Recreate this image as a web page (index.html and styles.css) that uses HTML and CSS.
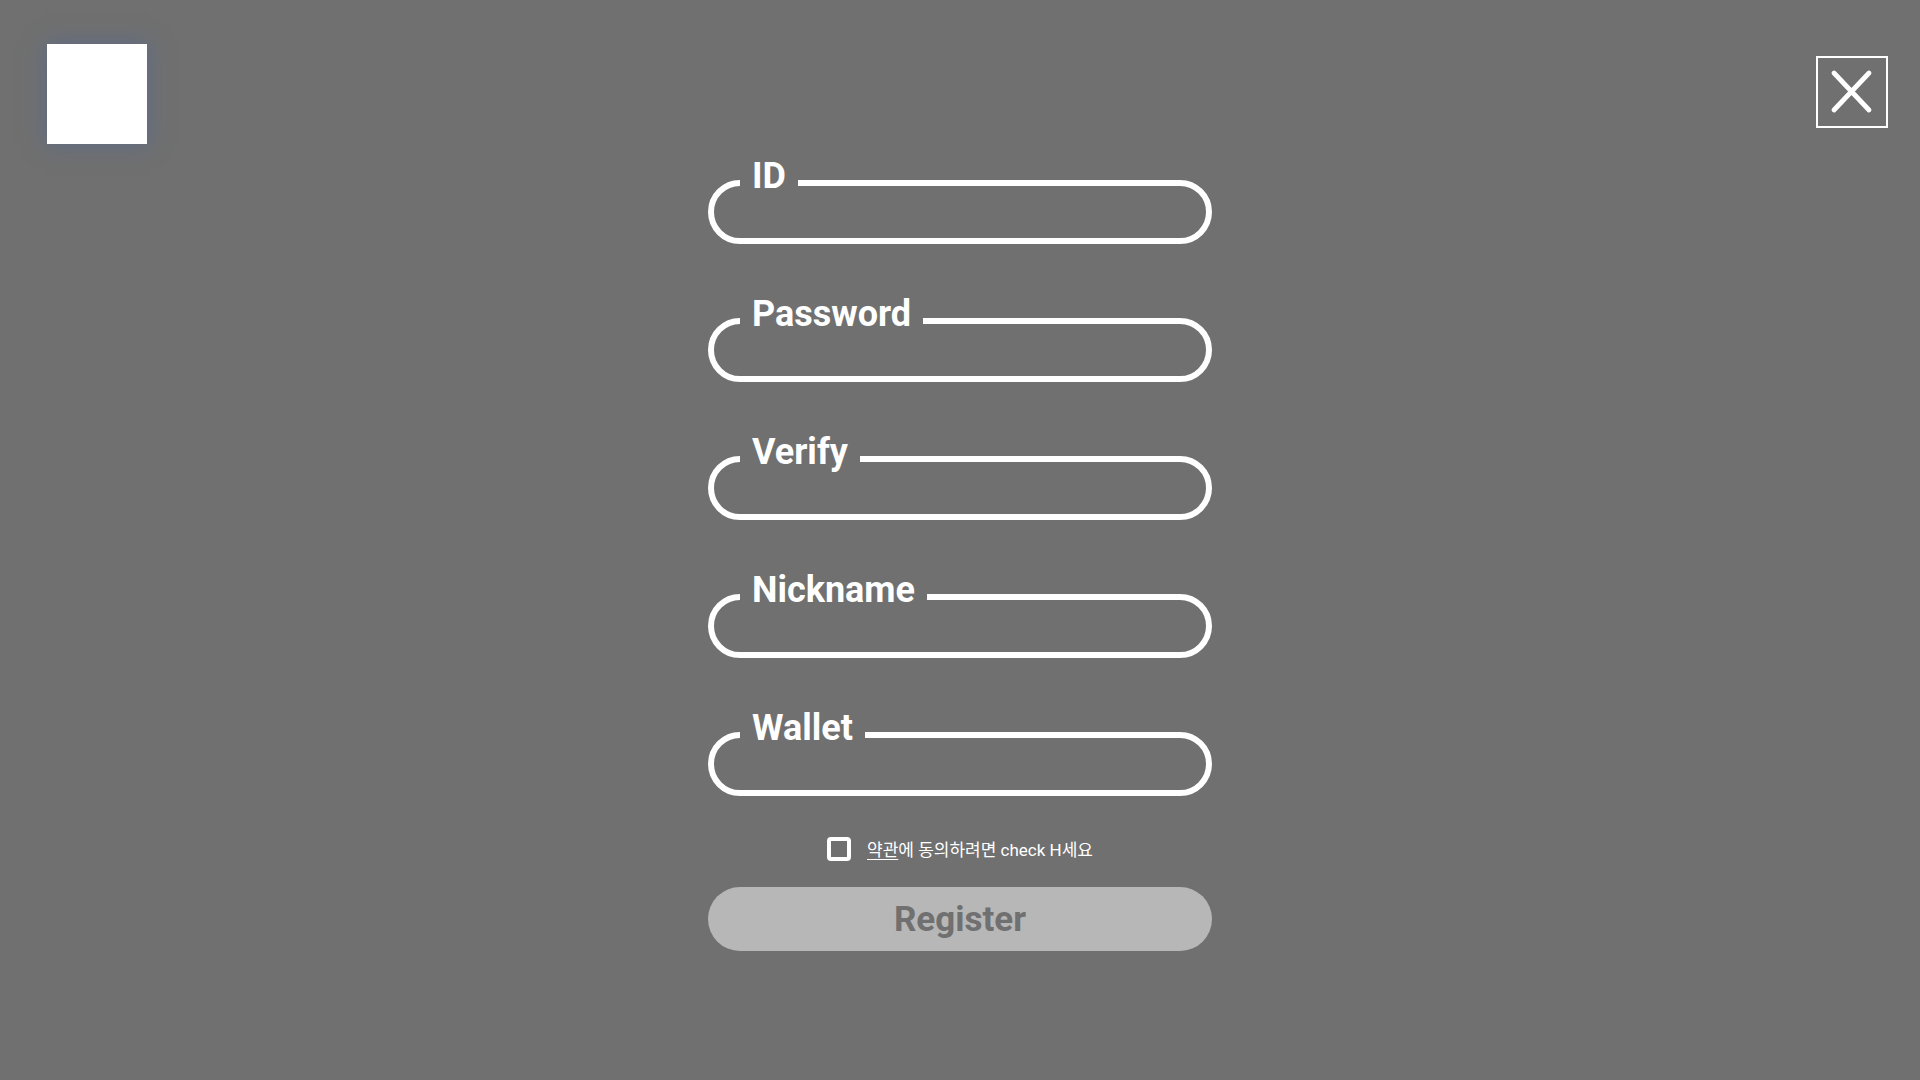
FILE: index.html
```html
<!DOCTYPE html>
<html lang="ko">
<head>
<meta charset="utf-8">
<title>Register</title>
<link rel="stylesheet" href="styles.css">
</head>
<body>
<div class="page">
  <header class="topbar">
    <div class="logo"></div>
    <button class="close" type="button" aria-label="close">
      <svg width="72" height="72" viewBox="0 0 72 72"><path d="M18 17 L53 54 M53 17 L18 54" stroke="#fff" stroke-width="4.8" stroke-linecap="round" fill="none"/></svg>
    </button>
  </header>
  <main class="main">
    <form class="form">
      <div class="fields">
        <div class="field"><label class="label">ID</label><input class="input" type="text"></div>
        <div class="field"><label class="label">Password</label><input class="input" type="password"></div>
        <div class="field"><label class="label">Verify</label><input class="input" type="password"></div>
        <div class="field"><label class="label">Nickname</label><input class="input" type="text"></div>
        <div class="field"><label class="label">Wallet</label><input class="input" type="text"></div>
      </div>
      <label class="agree"><input class="check" type="checkbox"><span class="agree-text"><a class="terms" href="#">약관</a>에 동의하려면 check H세요</span></label>
      <button class="register" type="button">Register</button>
    </form>
  </main>
</div>
</body>
</html>
```

FILE: styles.css
```css
html, body {
  margin: 0;
  padding: 0;
  background: #707070;
}
body {
  font-family: "Roboto", "Noto Sans CJK KR", sans-serif;
  color: #fff;
}
.page {
  width: 1920px;
  height: 1080px;
  overflow: hidden;
}
.topbar {
  display: flex;
  justify-content: space-between;
  align-items: flex-start;
  padding: 44px 32px 0 47px;
}
.logo {
  width: 100px;
  height: 100px;
  background: #fff;
  box-shadow: 0 0 20px 2px rgba(80, 105, 150, 0.55);
}
.close {
  margin-top: 12px;
  width: 72px;
  height: 72px;
  padding: 0;
  border: 2px solid #fff;
  background: transparent;
  box-sizing: border-box;
  display: flex;
  align-items: center;
  justify-content: center;
  cursor: pointer;
}
.close svg {
  display: block;
  flex: none;
}
.main {
  display: flex;
  justify-content: center;
  margin-top: 36px;
}
.form {
  width: 504px;
  display: flex;
  flex-direction: column;
}
.fields {
  display: flex;
  flex-direction: column;
  gap: 74px;
}
.field {
  position: relative;
  height: 64px;
  border: 6px solid #fff;
  border-radius: 32px;
  box-sizing: border-box;
  padding: 0 26px;
}
.label {
  position: absolute;
  left: 26px;
  top: -30px;
  padding: 0 12px;
  background: #707070;
  font-size: 36px;
  line-height: 40px;
  font-weight: 700;
  color: #fff;
  white-space: nowrap;
}
.input {
  display: block;
  width: 100%;
  height: 52px;
  border: 0;
  outline: none;
  background: transparent;
  color: #fff;
  font: 24px "Roboto", sans-serif;
  padding: 12px 0 0;
  box-sizing: border-box;
}
.agree {
  display: flex;
  align-items: center;
  justify-content: center;
  gap: 16px;
  margin-top: 41px;
  height: 24px;
  font-size: 17px;
  line-height: 24px;
  color: #fff;
}
.check {
  appearance: none;
  -webkit-appearance: none;
  margin: 0;
  width: 24px;
  height: 24px;
  border: 4px solid #fff;
  border-radius: 4px;
  box-sizing: border-box;
  background: transparent;
}
.agree-text {
  position: relative;
  top: 1px;
}
.terms {
  color: #fff;
  text-decoration: underline;
  text-underline-offset: 3px;
}
.register {
  margin-top: 26px;
  width: 504px;
  height: 64px;
  border: 0;
  border-radius: 32px;
  background: #b7b7b7;
  color: #707070;
  font-family: "Roboto", sans-serif;
  font-weight: 700;
  font-size: 35px;
  padding: 0;
}
```
